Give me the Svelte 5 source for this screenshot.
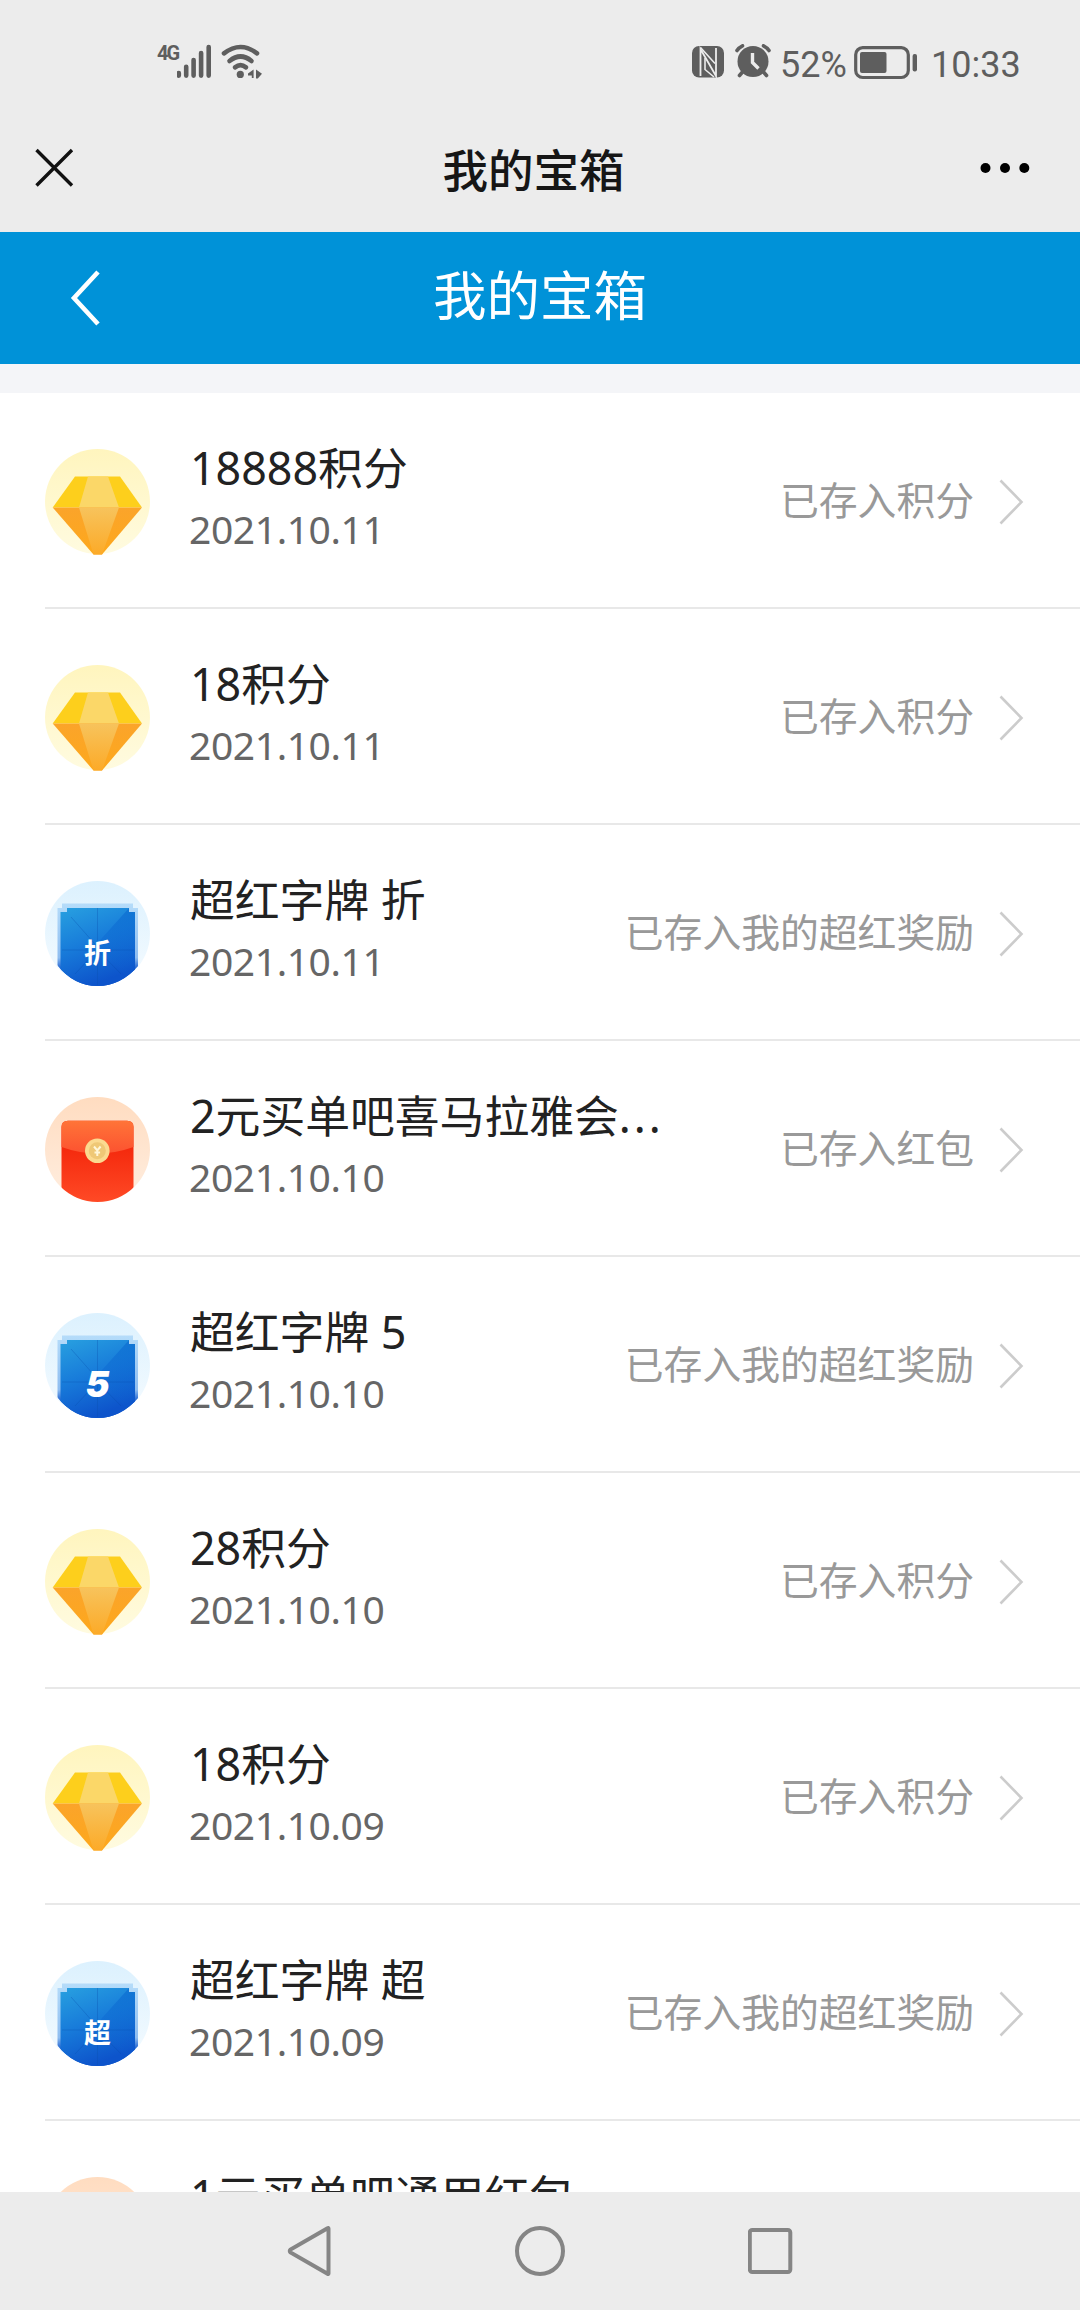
<script lang="ts">
  type Reward = {
    kind: 'points' | 'badge' | 'packet'
    title: string
    more?: boolean
    mark?: string
    date?: string
    status?: string
  }

  const POINTS = '已存入积分'
  const BADGE = '已存入我的超红奖励'
  const PACKET = '已存入红包'

  const rewards: Reward[] = [
    { kind: 'points', title: '18888积分', date: '2021.10.11', status: POINTS },
    { kind: 'points', title: '18积分', date: '2021.10.11', status: POINTS },
    { kind: 'badge', mark: '折', title: '超红字牌 折', date: '2021.10.11', status: BADGE },
    { kind: 'packet', title: '2元买单吧喜马拉雅会', more: true, date: '2021.10.10', status: PACKET },
    { kind: 'badge', mark: '5', title: '超红字牌 5', date: '2021.10.10', status: BADGE },
    { kind: 'points', title: '28积分', date: '2021.10.10', status: POINTS },
    { kind: 'points', title: '18积分', date: '2021.10.09', status: POINTS },
    { kind: 'badge', mark: '超', title: '超红字牌 超', date: '2021.10.09', status: BADGE },
    { kind: 'packet', title: '1元买单吧通用红包' },
  ]
</script>

<!-- shared gradients -->
<svg class="defs" width="0" height="0" aria-hidden="true">
  <defs>
    <linearGradient id="g-halo-yellow" x1="0" y1="0" x2="0" y2="1">
      <stop offset="0" stop-color="#fff5be" />
      <stop offset="1" stop-color="#fffbe0" />
    </linearGradient>
    <linearGradient id="g-halo-blue" x1="0" y1="0" x2="0" y2="1">
      <stop offset="0" stop-color="#dcf1fe" />
      <stop offset="1" stop-color="#f5fbff" />
    </linearGradient>
    <linearGradient id="g-halo-red" x1="0" y1="0" x2="0" y2="1">
      <stop offset="0" stop-color="#ffdcc0" />
      <stop offset="1" stop-color="#ffeee0" />
    </linearGradient>
    <linearGradient id="g-gem-low" x1="0" y1="0" x2="0" y2="1">
      <stop offset="0" stop-color="#fba42a" />
      <stop offset="1" stop-color="#fda81c" />
    </linearGradient>
    <linearGradient id="g-gem-mid" x1="0" y1="0" x2="0" y2="1">
      <stop offset="0" stop-color="#f7c35c" />
      <stop offset="1" stop-color="#fcaa28" />
    </linearGradient>
    <linearGradient id="g-badge" x1="0" y1="0" x2="0.35" y2="1">
      <stop offset="0" stop-color="#28a0e0" />
      <stop offset="0.5" stop-color="#187cda" />
      <stop offset="1" stop-color="#0d54cb" />
    </linearGradient>
    <linearGradient id="g-badge-edge" x1="0" y1="0" x2="0" y2="1">
      <stop offset="0" stop-color="#b5dcfa" />
      <stop offset="0.65" stop-color="#8fbdf0" />
      <stop offset="0.8" stop-color="#0d54cb" />
    </linearGradient>
    <linearGradient id="g-badge-shine" x1="0" y1="0" x2="0" y2="1">
      <stop offset="0" stop-color="#0d6fd2" stop-opacity="0.75" />
      <stop offset="1" stop-color="#0d5fd2" stop-opacity="0" />
    </linearGradient>
    <linearGradient id="g-packet" x1="0" y1="0" x2="0" y2="1">
      <stop offset="0.3" stop-color="#f4280c" />
      <stop offset="1" stop-color="#ff4a26" />
    </linearGradient>
    <linearGradient id="g-flap" x1="0" y1="0" x2="0" y2="1">
      <stop offset="0" stop-color="#ff7438" />
      <stop offset="1" stop-color="#fc5230" />
    </linearGradient>
    <clipPath id="c-disc"><circle cx="52.5" cy="52.5" r="52.5" /></clipPath>
    <clipPath id="c-shield"><path d="M0 0H106V84H94Q76 105 52.5 105Q29 105 12 84H0Z" /></clipPath>
  </defs>
</svg>

<div class="phone">
  <div class="statusbar">
    <div class="left">
      <span class="net">4G</span>
      <svg width="86" height="36" viewBox="177 44 86 36">
        <g stroke="#5e5e5e" stroke-width="4.6" stroke-linecap="round" fill="none">
          <path d="M178.8 73v2.6M186.2 66.8v8.8M193.6 60v15.6M201.1 53v22.600M208.7 47v28.600" />
          <path d="M224 53.4Q240.5 40.6 257 53.4" />
          <path d="M229.5 61Q240.5 52 251.5 61" />
          <path d="M235 67.4Q240.5 63 246 67.4" />
        </g>
        <circle cx="240.3" cy="74.4" r="3.6" fill="#5e5e5e" />
        <path d="M253.600 69.600v8.400h-1.800v-2.600h-3.800v-1.800z M256 69.600l6 4.200-4.200 4.600h-1.800z" fill="#5e5e5e" />
      </svg>
    </div>
    <div class="right">
      <svg width="32" height="32" viewBox="0 0 32 32">
        <rect width="32" height="31.5" rx="7" fill="#5e5e5e" />
        <path d="M8.500 30V3L24 30V2" fill="none" stroke="#ececec" stroke-width="1.800" />
        <path d="M8.500 1.500L23 17.500M13 12V23.500L22 31" fill="none" stroke="#ececec" stroke-width="1.600" />
      </svg>
      <svg class="alarm" width="36" height="34" viewBox="0 0 36 34">
        <circle cx="18" cy="17.5" r="15.5" fill="#5e5e5e" />
        <path d="M2 6.5Q4 3.5 7.5 1.8M34 6.5Q32 3.5 28.5 1.8M7.5 28L4.5 31.5M28.5 28L31.5 31.5" stroke="#5e5e5e" stroke-width="3.6" stroke-linecap="round" fill="none" />
        <path d="M17.5 9v9.5l6 6" stroke="#ececec" stroke-width="3.4" fill="none" />
      </svg>
      <span class="percent">52%</span>
      <svg class="battery" width="64" height="34" viewBox="0 0 64 34">
        <rect x="1.7" y="1.7" width="52.6" height="29.8" rx="7" fill="none" stroke="#5e5e5e" stroke-width="3.2" />
        <rect x="6" y="6" width="26.5" height="21" rx="2" fill="#5e5e5e" />
        <rect x="58.6" y="8" width="4.4" height="17.5" rx="2" fill="#5e5e5e" />
      </svg>
      <span class="time">10:33</span>
    </div>
  </div>

  <div class="titlebar">
    <svg width="40" height="40" viewBox="0 0 40 40">
      <path d="M1.5 2L37 37.5M37 2L1.5 37.5" stroke="#111" stroke-width="3.4" />
    </svg>
    <h1>我的宝箱</h1>
    <svg width="50" height="12" viewBox="0 0 50 12">
      <circle cx="5.5" cy="6" r="5" />
      <circle cx="25" cy="6" r="5" />
      <circle cx="44.3" cy="6" r="5" />
    </svg>
  </div>

  <header>
    <svg width="32" height="58" viewBox="0 0 32 58">
      <path d="M28 3L4 29L28 55" fill="none" stroke="#fff" stroke-width="4.6" />
    </svg>
    <h2>我的宝箱</h2>
  </header>

  <main>
    {#each rewards as r}
      <div class="row">
        <svg class="icon" width="106" height="106" viewBox="0 0 106 106">
          {#if r.kind === 'points'}
            <circle cx="52.5" cy="52.5" r="52.5" fill="url(#g-halo-yellow)" />
            <path d="M30 27.5H75L97 58.5H7.7Z" fill="#fdcf1c" />
            <path d="M43 27.5H63L74 58.5H34Z" fill="#fbd768" />
            <path d="M7.7 58.5H97L57 105.5H48.5Z" fill="url(#g-gem-low)" />
            <path d="M34 58.5H74L57 105.5H48.5Z" fill="url(#g-gem-mid)" />
          {:else if r.kind === 'badge'}
            <circle cx="52.5" cy="52.5" r="52.5" fill="url(#g-halo-blue)" />
            <g clip-path="url(#c-shield)">
              <path d="M17 22.500H88V27H93V106H12.500V27H17Z" fill="url(#g-badge-edge)" />
              <path d="M22 27H84V31H90V106H15.500V31H22Z" fill="url(#g-badge)" />
              <path d="M84 27L52.5 62L90 106V31H84Z" fill="url(#g-badge-shine)" />
              <path d="M52.5 27V104M17 69H89M26 36L52.5 66M30 93L52.5 69L76 93" stroke="#0b4fae" stroke-width="0.8" opacity="0.4" fill="none" />
            </g>
            <text class="mark" class:digit={r.mark === '5'} x="52.5" y={r.mark === '5' ? 83.5 : 81.5} text-anchor="middle">{r.mark}</text>
          {:else}
            <circle cx="52.5" cy="52.5" r="52.5" fill="url(#g-halo-red)" />
            <g clip-path="url(#c-disc)">
              <path d="M16.5 30Q16.5 23.700 23 23.700H82Q88.5 23.700 88.5 30V106H16.5Z" fill="url(#g-packet)" />
              <path d="M16.5 30Q16.5 23.700 23 23.700H82Q88.5 23.700 88.5 30V50Q52.5 63 16.5 50Z" fill="url(#g-flap)" />
            </g>
            <circle cx="52.3" cy="53.7" r="12.3" fill="#fbda90" />
            <circle cx="52.3" cy="53.7" r="8.5" fill="#efc876" />
            <path d="M49 49.5l3.300 4 3.300-4M52.300 53v6M49.500 55.500h5.600" stroke="#fff6d8" stroke-width="2" fill="none" />
          {/if}
        </svg>
        <div class="info">
          <div class="title">{r.title}{#if r.more}<span class="more">...</span>{/if}</div>
          {#if r.date}
            <div class="date">{r.date}</div>
          {/if}
        </div>
        {#if r.status}
          <div class="status">{r.status}</div>
          <svg class="arrow" width="25" height="46" viewBox="0 0 25 46">
            <path d="M1.5 1.5L22.5 23L1.5 44.5" fill="none" stroke="#ccc" stroke-width="2.6" />
          </svg>
        {/if}
      </div>
    {/each}
  </main>

  <nav>
    <svg width="46" height="52" viewBox="0 0 46 52">
      <path d="M42.500 3.500V48.500Q42.500 49.500 41.500 48.800L4.500 27.500Q3 26 4.500 24.500L41.500 3.200Q42.500 2.500 42.500 3.500Z" />
    </svg>
    <svg width="52" height="52" viewBox="0 0 52 52">
      <circle cx="26" cy="26" r="23" />
    </svg>
    <svg width="46" height="52" viewBox="0 0 46 52">
      <rect x="1.8" y="5" width="40.5" height="42" rx="2.5" />
    </svg>
  </nav>
</div>

<style>
  :global(body) {
    margin: 0;
    background: #fff;
  }
  .defs {
    position: absolute;
  }
  .phone {
    display: flex;
    flex-direction: column;
    width: 1080px;
    height: 2310px;
    overflow: hidden;
    font-family: 'Noto Sans', 'Noto Sans CJK SC', sans-serif;
  }
  svg {
    display: block;
    flex: none;
  }
  h1,
  h2 {
    margin: 0;
    font-family: 'Noto Sans CJK SC', sans-serif;
  }
  .statusbar {
    display: flex;
    justify-content: space-between;
    box-sizing: border-box;
    height: 104px;
    padding: 44px 59px 0 157px;
    background: #ececec;
    color: #5e5e5e;
    font-family: Roboto, sans-serif;
  }
  .left,
  .right {
    display: flex;
    align-items: flex-start;
  }
  .net {
    width: 20px;
    font: bold 20px/18px 'Roboto', sans-serif;
    letter-spacing: -2px;
  }
  .right {
    padding-top: 2px;
  }
  .alarm {
    margin: -2px 9px 0 11px;
  }
  .percent,
  .time {
    font-size: 36px;
    line-height: 38px;
  }
  .percent {
    width: 74px;
  }
  .time {
    width: 90px;
    margin-left: 13px;
  }
  .titlebar {
    display: flex;
    align-items: center;
    justify-content: space-between;
    height: 128px;
    padding: 0 50px 0 35px;
    background: #ececec;
  }
  h1 {
    padding-left: 12px;
    color: #161616;
    font-size: 45.5px;
    line-height: 60px;
    font-weight: 500;
  }
  header {
    display: grid;
    grid-template-columns: 32px 1fr 32px;
    align-items: center;
    height: 132px;
    padding: 0 70px;
    background: #0092d8;
  }
  h2 {
    padding-bottom: 11px;
    color: #fff;
    font-size: 53.5px;
    line-height: 70px;
    font-weight: 400;
    text-align: center;
  }
  main {
    flex: 1;
    min-height: 0;
    overflow: hidden;
    border-top: 29px solid #f4f5f8;
    background: #fff;
  }
  .row {
    display: flex;
    align-items: center;
    box-sizing: border-box;
    height: 216px;
    margin-left: 45px;
    padding-right: 56px;
    border-bottom: 2px solid #e8e8e8;
  }
  .icon {
    margin-top: 4px;
  }
  .mark {
    fill: #fff;
    font: 700 27px 'Noto Sans CJK SC', sans-serif;
  }
  .digit {
    font: italic 900 36px 'Inter', sans-serif;
  }
  .info {
    flex: 1;
    align-self: flex-start;
    margin: 44px 0 0 39px;
    white-space: nowrap;
  }
  .title {
    height: 62px;
    color: #222;
    font-size: 44.8px;
    line-height: 62px;
  }
  .more {
    letter-spacing: 3px;
  }
  .date {
    height: 60px;
    margin-left: -1px;
    color: #666;
    font-size: 39px;
    line-height: 60px;
    letter-spacing: -0.4px;
  }
  .status {
    padding-bottom: 1px;
    color: #999;
    font-size: 38.8px;
    line-height: 56px;
    white-space: nowrap;
  }
  .arrow {
    margin: 4px 0 0 25px;
  }
  nav {
    display: flex;
    align-items: center;
    justify-content: center;
    gap: 182px;
    height: 118px;
    background: #ececec;
  }
  nav svg {
    fill: none;
    stroke: #858585;
    stroke-width: 4;
  }
</style>
